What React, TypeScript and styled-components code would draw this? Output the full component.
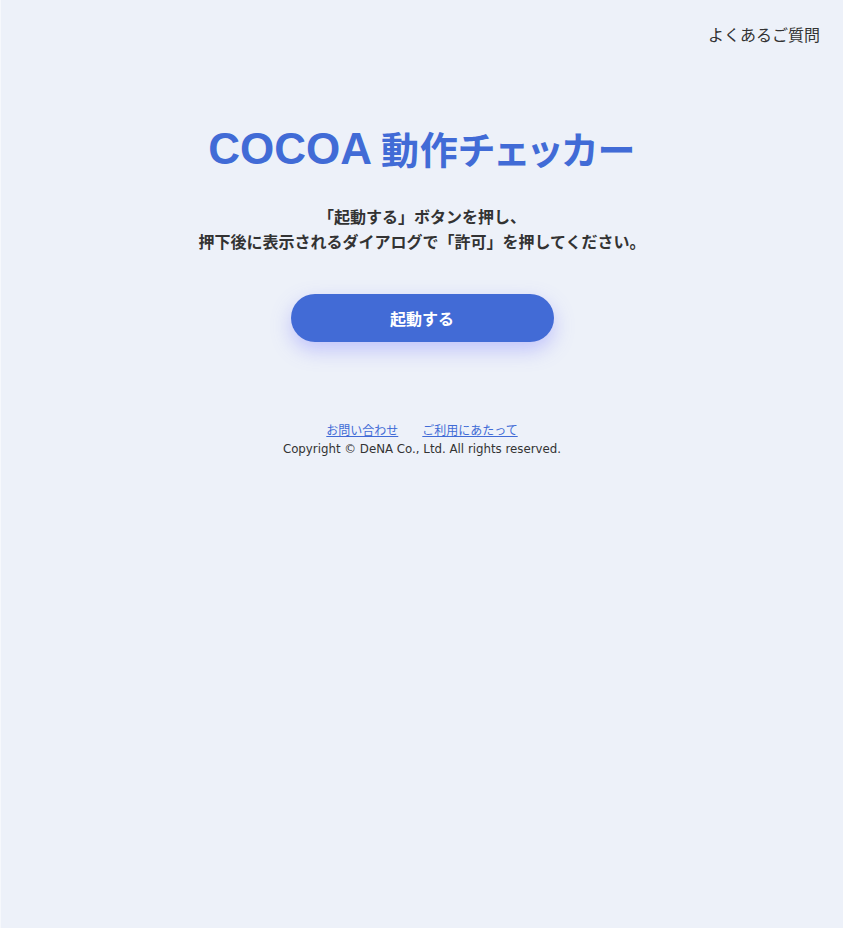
import React from "react";
import styled, { createGlobalStyle } from "styled-components";

const Global = createGlobalStyle`
  html, body { margin: 0; padding: 0; background: #edf1f9; }
  body { font-family: "Liberation Sans", "Noto Sans CJK JP", sans-serif; color: #333; }
`;

const Page = styled.div`
  min-height: 928px;
  box-sizing: border-box;
  border-left: 1px solid #f6f8fc;
  display: flex;
  flex-direction: column;
  align-items: center;
`;

const Header = styled.header`
  align-self: stretch;
  display: flex;
  justify-content: flex-end;
  padding: 25px 23px 0 0;
`;

const FaqLink = styled.a`
  font-size: 16px;
  color: #333;
  text-decoration: none;
  line-height: 22px;
`;

const Title = styled.h1`
  margin: 72px 0 0;
  height: 60px;
  font-size: 44px;
  font-weight: 700;
  color: #416bd6;
  line-height: 60px;
  font-feature-settings: "palt";
  display: flex;
  align-items: baseline;
  gap: 9px;
`;

const TitleJa = styled.span`
  font-size: 38px;
  letter-spacing: 0.8px;
`;

const Lead = styled.p`
  margin: 26px 0 0;
  text-align: center;
  font-size: 16px;
  font-weight: 700;
  line-height: 25px;
  color: #333;
`;

const LaunchButton = styled.button`
  margin-top: 39px;
  width: 263px;
  height: 48px;
  border: none;
  border-radius: 24px;
  background: #426bd6;
  color: #fff;
  font-family: inherit;
  font-size: 16px;
  font-weight: 700;
  box-shadow: 0 8px 20px rgba(110, 110, 255, 0.35);
  cursor: pointer;
`;

const Footer = styled.footer`
  margin-top: 80px;
  display: flex;
  flex-direction: column;
  align-items: center;
`;

const FooterLinks = styled.div`
  display: flex;
  gap: 24px;
`;

const FooterLink = styled.a`
  font-size: 12px;
  line-height: 18px;
  color: #416bd6;
  text-decoration: underline;
`;

const Copyright = styled.small`
  font-size: 11.8px;
  line-height: 18px;
  color: #333;
  font-family: "DejaVu Sans", "Noto Sans CJK JP", sans-serif;
`;

export default function App() {
  return (
    <>
      <Global />
      <Page>
        <Header>
          <FaqLink href="#">よくあるご質問</FaqLink>
        </Header>
        <Title>
          <span>COCOA</span>
          <TitleJa>動作チェッカー</TitleJa>
        </Title>
        <Lead>
          「起動する」ボタンを押し、
          <br />
          押下後に表示されるダイアログで「許可」を押してください。
        </Lead>
        <LaunchButton>起動する</LaunchButton>
        <Footer>
          <FooterLinks>
            <FooterLink href="#">お問い合わせ</FooterLink>
            <FooterLink href="#">ご利用にあたって</FooterLink>
          </FooterLinks>
          <Copyright>Copyright © DeNA Co., Ltd. All rights reserved.</Copyright>
        </Footer>
      </Page>
    </>
  );
}
